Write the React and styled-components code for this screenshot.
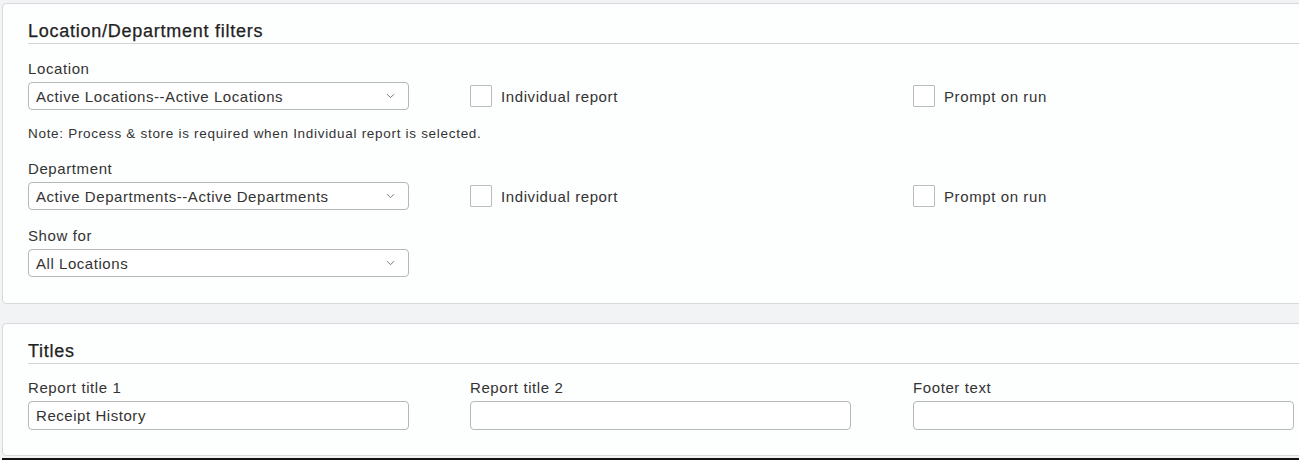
import React from "react";
import styled, { createGlobalStyle } from "styled-components";

const GlobalStyle = createGlobalStyle`
  html, body {
    margin: 0;
    padding: 0;
    background: #f1f3f4;
    overflow: hidden;
  }
  body {
    font-family: "Liberation Sans", Arial, sans-serif;
    color: #333;
  }
`;

const Chevron = () => (
  <svg width="9" height="6" viewBox="0 0 9 6" fill="none">
    <path d="M1 1.2l3.5 3.5 3.5-3.5" stroke="#777" strokeWidth="1" />
  </svg>
);

const SelectBox = ({ value }) => (
  <Select>
    <span>{value}</span>
    <Chevron />
  </Select>
);

const Check = ({ label }) => (
  <CheckWrap>
    <Box />
    <span>{label}</span>
  </CheckWrap>
);

const App = () => {
  return (
    <>
      <GlobalStyle />
      <Page>
        <Panel>
          <Heading>Location/Department filters</Heading>
          <Field $top={15}>
            <Label>Location</Label>
            <Row>
              <SelectBox value="Active Locations--Active Locations" />
              <Check label="Individual report" />
              <Check label="Prompt on run" />
            </Row>
          </Field>
          <Note>Note: Process &amp; store is required when Individual report is selected.</Note>
          <Field $top={15}>
            <Label>Department</Label>
            <Row>
              <SelectBox value="Active Departments--Active Departments" />
              <Check label="Individual report" />
              <Check label="Prompt on run" />
            </Row>
          </Field>
          <Field $top={16}>
            <Label>Show for</Label>
            <Row>
              <SelectBox value="All Locations" />
            </Row>
          </Field>
        </Panel>

        <Panel $last>
          <Heading>Titles</Heading>
          <Row $top={14}>
            <Col>
              <Label>Report title 1</Label>
              <Input defaultValue="Receipt History" />
            </Col>
            <Col>
              <Label>Report title 2</Label>
              <Input defaultValue="" />
            </Col>
            <Col>
              <Label>Footer text</Label>
              <Input defaultValue="" />
            </Col>
          </Row>
        </Panel>
        <BottomRule />
      </Page>
    </>
  );
};

const Page = styled.div`
  width: 1360px;
  padding: 3px 0 0 2px;
  display: flex;
  flex-direction: column;
  gap: 19px;
`;

const Panel = styled.div`
  background: #fdfefe;
  border: 1px solid #d6dadd;
  border-radius: 4px;
  padding: 16px 0 25px 25px;
  margin-bottom: ${(p) => (p.$last ? "-18px" : "0")};
  padding-bottom: ${(p) => (p.$last ? "25px" : "26px")};
`;

const Heading = styled.div`
  font-size: 18px;
  line-height: 22px;
  letter-spacing: 0.75px;
  color: #222;
  -webkit-text-stroke: 0.25px #222;
  padding-bottom: 1px;
  border-bottom: 1px solid #d2d6d9;
`;

const Field = styled.div`
  margin-top: ${(p) => p.$top}px;
`;

const Label = styled.div`
  font-size: 15px;
  line-height: 20px;
  letter-spacing: 0.6px;
  color: #333;
  margin-bottom: 3px;
`;

const Row = styled.div`
  display: grid;
  grid-template-columns: 442px 443px 1fr;
  align-items: center;
  margin-top: ${(p) => p.$top || 0}px;
`;

const Col = styled.div`
  display: flex;
  flex-direction: column;
`;

const Select = styled.div`
  width: 381px;
  height: 28px;
  box-sizing: border-box;
  border: 1px solid #b4b8bb;
  border-radius: 4px;
  background: #fff;
  display: flex;
  align-items: center;
  justify-content: space-between;
  padding: 0 13px 0 7px;
  font-size: 15px;
  letter-spacing: 0.55px;
  color: #333;
`;

const Input = styled.input`
  width: 381px;
  height: 29px;
  box-sizing: border-box;
  border: 1px solid #b4b8bb;
  border-radius: 4px;
  background: #fff;
  padding: 0 7px;
  font-family: "Liberation Sans", Arial, sans-serif;
  font-size: 15px;
  letter-spacing: 0.55px;
  color: #333;
  outline: none;
`;

const CheckWrap = styled.label`
  display: flex;
  align-items: center;
  gap: 9px;
  font-size: 15px;
  letter-spacing: 0.6px;
  color: #333;
`;

const Box = styled.span`
  width: 22px;
  height: 22px;
  box-sizing: border-box;
  border: 1px solid #b9bdc0;
  border-radius: 1px;
  background: #fff;
`;

const Note = styled.div`
  margin-top: 14px;
  font-size: 13.5px;
  line-height: 20px;
  letter-spacing: 0.7px;
  color: #333;
`;

const BottomRule = styled.div`
  height: 2px;
  background: #111;
  margin-top: 1px;
  position: relative;
  z-index: 1;
`;

export default App;
